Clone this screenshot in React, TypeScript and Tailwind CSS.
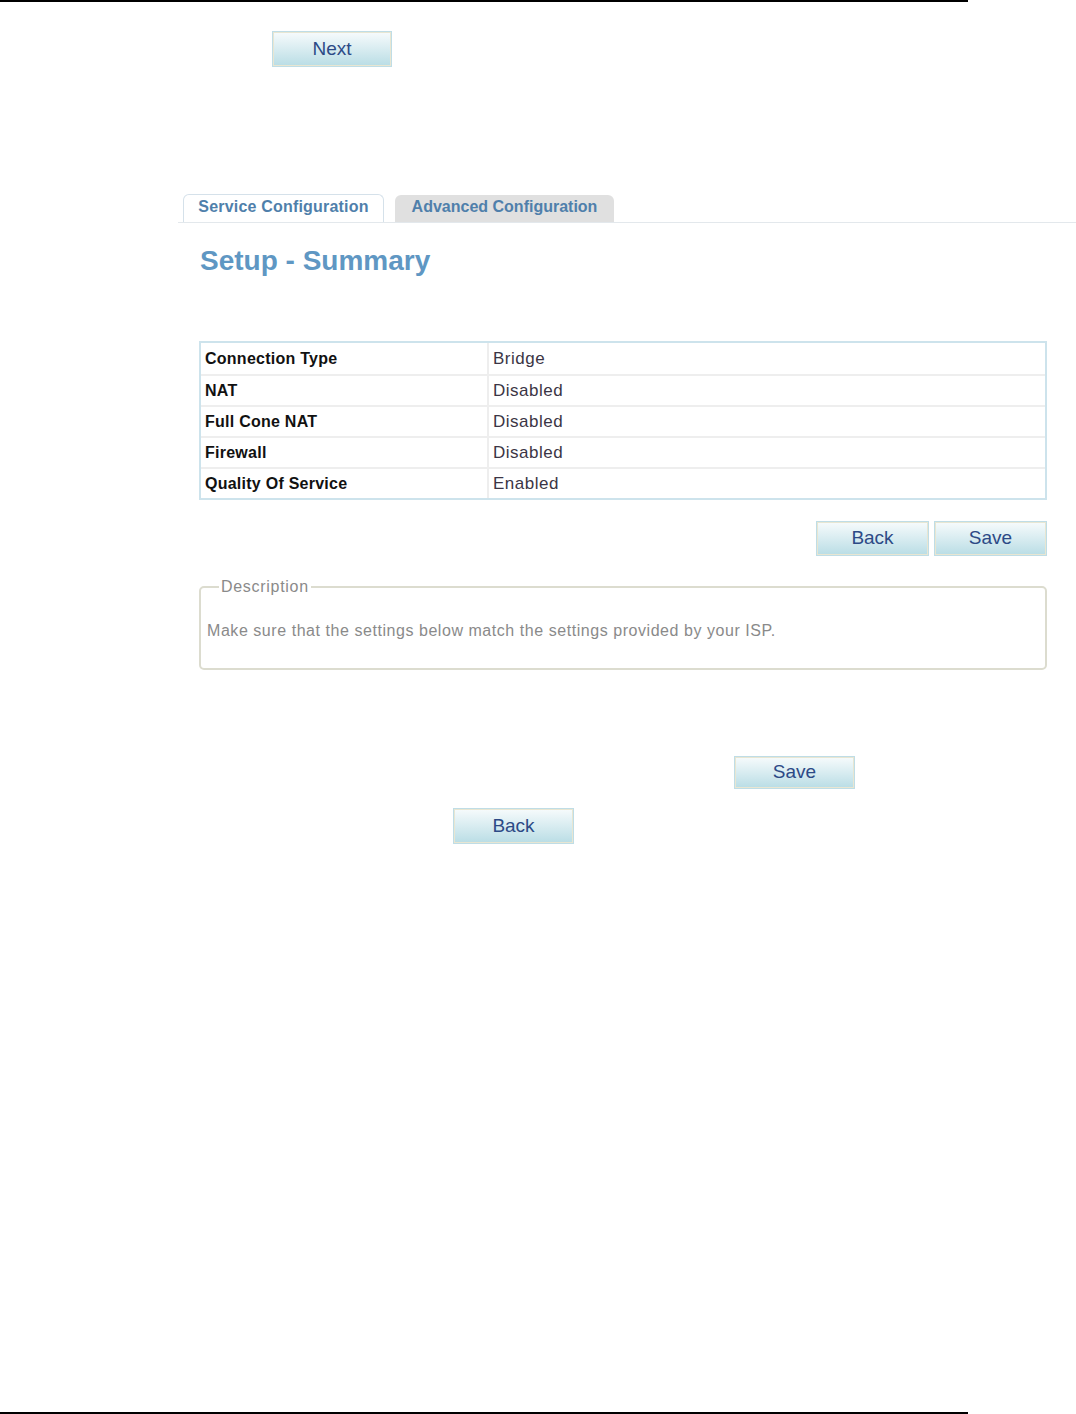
import React from "react";

const font = { fontFamily: '"Liberation Sans", Arial, sans-serif' };

function Btn({ label, className }: { label: string; className?: string }) {
  return (
    <button
      className={
        "flex items-center justify-center border border-[#bfdde6] bg-gradient-to-b from-[#f7fbfc] to-[#b9dde5] text-[19px] text-[#2c4a86] shadow-[inset_0_0_0_1px_#e8e6d2] " +
        (className ?? "")
      }
    >
      {label}
    </button>
  );
}

const rows = [
  ["Connection Type", "Bridge"],
  ["NAT", "Disabled"],
  ["Full Cone NAT", "Disabled"],
  ["Firewall", "Disabled"],
  ["Quality Of Service", "Enabled"],
];

export default function App() {
  return (
    <div className="relative flex h-[1414px] w-[1076px] flex-col bg-white" style={font}>
      <div className="h-[2px] w-[968px] bg-black" />

      <Btn label="Next" className="ml-[272px] mt-[29px] h-[36px] w-[120px]" />

      {/* tabs */}
      <div className="ml-[178px] mt-[127px] flex items-end border-b border-[#e3e8ec] pl-[5px]">
        <div className="flex h-[28px] w-[201px] items-center justify-center rounded-t-[6px] border border-b-0 border-[#d5e1ea] bg-white pb-[3px] text-[16px] font-bold tracking-[0.2px] text-[#4f7fab]">
          Service Configuration
        </div>
        <div className="ml-[11px] flex h-[27px] w-[219px] items-center justify-center rounded-t-[6px] bg-[#e0e0e0] pb-[3px] text-[16px] font-bold text-[#4f7fab]">
          Advanced Configuration
        </div>
      </div>

      <div className="ml-[200px] mt-[19px] text-[28px] font-bold leading-[38px] text-[#5f97c3]">
        Setup - Summary
      </div>

      {/* summary table */}
      <div className="ml-[199px] mt-[61px] w-[848px] border-2 border-[#cde3ec]">
        {rows.map(([k, v], i) => (
          <div
            key={k}
            className={
              "flex h-[31px] items-center " +
              (i > 0 ? "border-t-2 border-[#eeeeee]" : "")
            }
          >
            <div className="flex h-full w-[288px] items-center border-r-2 border-[#eeeeee] pl-[4px] text-[16px] font-bold tracking-[0.25px] text-[#111]">
              {k}
            </div>
            <div className="pl-[4px] text-[17px] tracking-[0.5px] text-[#3b3545]">{v}</div>
          </div>
        ))}
      </div>

      <div className="ml-[816px] mt-[21px] flex gap-[5px]">
        <Btn label="Back" className="h-[35px] w-[113px]" />
        <Btn label="Save" className="h-[35px] w-[113px]" />
      </div>

      {/* description */}
      <fieldset className="ml-[199px] mt-[19px] h-[95px] w-[848px] rounded-[5px] border-2 border-[#dcdccf] px-[6px]">
        <legend className="ml-[12px] px-[2px] text-[16px] tracking-[0.7px] text-[#8a8a8a]">Description</legend>
        <div className="mt-[20px] text-[16px] tracking-[0.55px] text-[#8a8a8a]">
          Make sure that the settings below match the settings provided by your ISP.
        </div>
      </fieldset>

      <Btn label="Save" className="ml-[734px] mt-[86px] h-[33px] w-[121px]" />
      <Btn label="Back" className="ml-[453px] mt-[19px] h-[36px] w-[121px]" />

      <div className="absolute bottom-0 left-0 h-[2px] w-[968px] bg-black" />
    </div>
  );
}
